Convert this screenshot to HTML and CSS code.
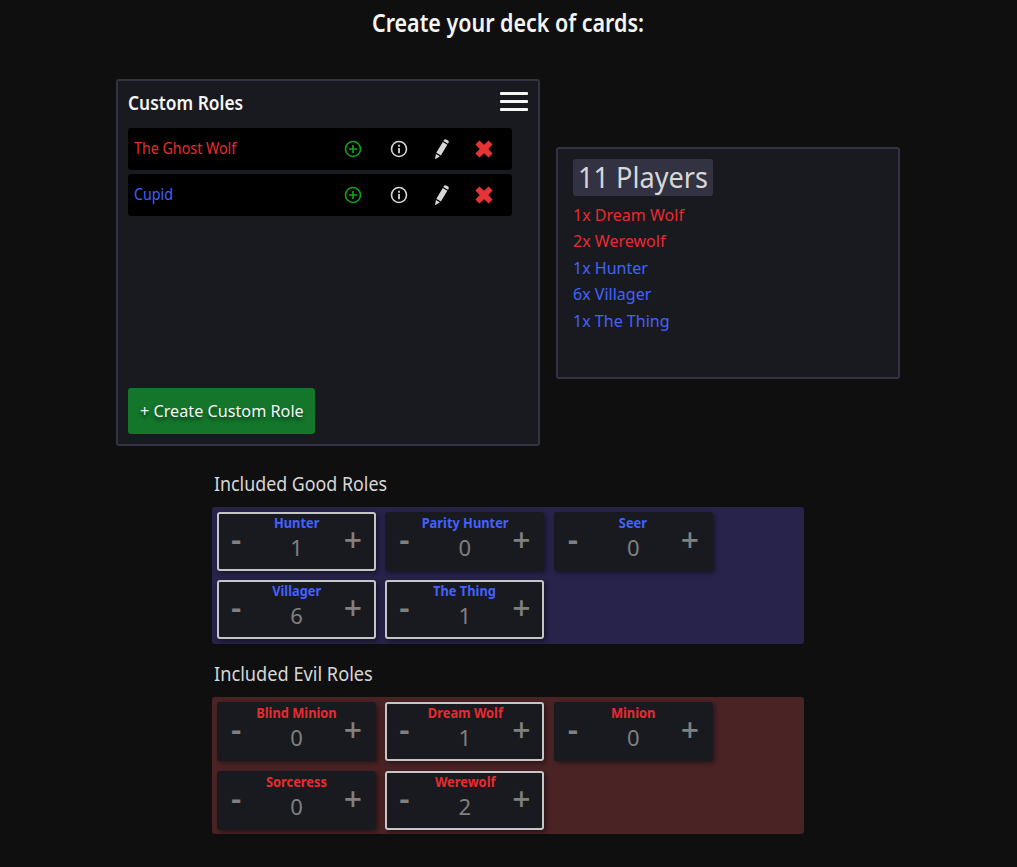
FILE: index.html
```html
<!DOCTYPE html>
<html lang="en">
<head>
<meta charset="utf-8">
<title>Create a game</title>
<link rel="stylesheet" href="styles.css">
</head>
<body>
<svg class="sprite" aria-hidden="true">
  <symbol id="add" viewBox="0 0 18 18"><circle cx="9" cy="9" r="7.5" fill="none" stroke="#0fa31d" stroke-width="1.6"/><path d="M9 5v8M5 9h8" stroke="#0fa31d" stroke-width="1.7"/></symbol>
  <symbol id="info" viewBox="0 0 18 18"><circle cx="9" cy="9" r="7.5" fill="none" stroke="#d7d7d7" stroke-width="1.6"/><path d="M9 4.8v1.9M9 8v5.2" stroke="#d7d7d7" stroke-width="1.8"/></symbol>
  <symbol id="pencil" viewBox="0 0 16 20"><path d="M10.1.7Q11 0 12.2.5l1.9 1.1q1 .7.6 1.8l-.8 1.4L9.3 2.1zM8.8 3l4.5 2.7-6.4 10.8-4.6-2.7zM1.9 14.9l4 2.3-4.3 2.9-.5-.3z" fill="#d7d7d7"/></symbol>
  <symbol id="remove" viewBox="0 0 18 18"><path d="M4.4.4 9 4.7 13.6.4 17.6 4.4 13.3 9l4.3 4.6-4 4L9 13.3l-4.6 4.3-4-4L4.7 9 .4 4.4z" fill="#e73333"/></symbol>
</svg>
<main>
  <h1><span>Create your deck of cards:</span></h1>
  <div class="top">
    <section class="custom">
      <header><h2><span>Custom Roles</span></h2><div class="menu"><i></i><i></i><i></i></div></header>
      <div class="role evil"><div class="name"><span>The Ghost Wolf</span></div><svg class="add"><use href="#add"/></svg><svg class="info"><use href="#info"/></svg><svg class="pencil"><use href="#pencil"/></svg><svg class="remove"><use href="#remove"/></svg></div>
      <div class="role good"><div class="name"><span>Cupid</span></div><svg class="add"><use href="#add"/></svg><svg class="info"><use href="#info"/></svg><svg class="pencil"><use href="#pencil"/></svg><svg class="remove"><use href="#remove"/></svg></div>
      <button><span>+ Create Custom Role</span></button>
    </section>
    <section class="players">
      <div class="count"><span>11 Players</span></div>
      <ul>
        <li class="evil"><span>1x Dream Wolf</span></li>
        <li class="evil"><span>2x Werewolf</span></li>
        <li class="good"><span>1x Hunter</span></li>
        <li class="good"><span>6x Villager</span></li>
        <li class="good"><span>1x The Thing</span></li>
      </ul>
    </section>
  </div>
  <h3><span>Included Good Roles</span></h3>
  <div class="deck deck-good good">
    <div class="card on"><b>-</b><div><h4>Hunter</h4><p>1</p></div><em>+</em></div>
    <div class="card"><b>-</b><div><h4>Parity Hunter</h4><p>0</p></div><em>+</em></div>
    <div class="card"><b>-</b><div><h4>Seer</h4><p>0</p></div><em>+</em></div>
    <div class="card on"><b>-</b><div><h4>Villager</h4><p>6</p></div><em>+</em></div>
    <div class="card on"><b>-</b><div><h4>The Thing</h4><p>1</p></div><em>+</em></div>
  </div>
  <h3><span>Included Evil Roles</span></h3>
  <div class="deck deck-evil evil">
    <div class="card"><b>-</b><div><h4>Blind Minion</h4><p>0</p></div><em>+</em></div>
    <div class="card on"><b>-</b><div><h4>Dream Wolf</h4><p>1</p></div><em>+</em></div>
    <div class="card"><b>-</b><div><h4>Minion</h4><p>0</p></div><em>+</em></div>
    <div class="card"><b>-</b><div><h4>Sorceress</h4><p>0</p></div><em>+</em></div>
    <div class="card on"><b>-</b><div><h4>Werewolf</h4><p>2</p></div><em>+</em></div>
  </div>
</main>
</body>
</html>
```
FILE: styles.css
```css
* { box-sizing: border-box; }
html, body { margin: 0; height: 867px; overflow: hidden; }
body { background: #0f0f10; color: #d7d7d7; font-family: "Noto Sans", sans-serif; font-stretch: semi-condensed; }
h1, h2, h3, h4, p, ul { margin: 0; padding: 0; list-style: none; white-space: nowrap; }
.sprite { display: none; }
span { display: inline-block; transform-origin: 0 50%; }
.good { color: #4361ff; }
.evil { color: #e72b2f; }
h1 { height: 46px; line-height: 45px; text-align: center; font-size: 25px; font-weight: 600; color: #f5f5f5; }
h1 span { transform-origin: 50% 50%; transform: translateX(-.5px) scaleX(.858); }
.top { display: flex; align-items: center; gap: 16px; margin: 33px 0 0 116px; }
.custom { width: 424px; height: 367px; padding: 0 10px 10px; border: 2px solid #333243; border-radius: 3px; background: #191a1f; display: flex; flex-direction: column; }
.custom header { display: flex; justify-content: space-between; height: 47px; }
h2 { font-size: 19.5px; line-height: 44px; font-weight: 600; color: #f5f5f5; }
h2 span { transform: scaleX(.89); }
.menu { display: flex; flex-direction: column; gap: 5px; padding-top: 11px; }
.menu i { width: 28px; height: 3px; border-radius: 1px; background: #f7f7f4; }
.role { display: flex; align-items: center; width: 384px; height: 42px; margin-bottom: 4px; padding-left: 6px; border-radius: 3px; background: #000; }
.role .name { width: 210px; height: 42px; font-size: 15.5px; line-height: 41px; }
.name span { transform: scaleX(.92); }
.role svg { flex: none; }
.role .add, .role .info { width: 18px; height: 18px; }
.role .info { margin-left: 28px; }
.role .pencil { width: 16px; height: 20px; margin-left: 26px; }
.role .remove { width: 18px; height: 18px; margin-left: 25px; }
button { width: 187px; height: 46px; margin-top: auto; padding: 0 0 0 12px; border: 0; border-radius: 3px; background: #13762b; color: #f5f5f5; font: inherit; font-size: 17px; line-height: 46px; text-align: left; text-shadow: 0 3px 4px rgba(0,0,0,.55); white-space: nowrap; }
button span { transform: scaleX(.953); }
.players { width: 344px; height: 232px; padding: 10px 15px; border: 2px solid #333243; border-radius: 3px; background: #191a1f; }
.count { width: 140px; height: 37px; padding-left: 5px; border-radius: 3px; background: #333243; font-size: 29px; line-height: 36px; white-space: nowrap; }
.count span { transform: scaleX(.935); }
ul { padding-top: 5px; }
li { height: 26.5px; font-size: 17px; line-height: 27px; }
li span { transform: scaleX(.943); }
h3 { height: 61px; padding: 22px 0 0 214px; font-size: 19px; line-height: 32px; font-weight: 400; }
h3 span { transform: scaleX(.938); }
.deck { display: grid; grid-template-columns: repeat(3, 159px); grid-auto-rows: 59px; gap: 9px 9.4px; width: 592px; height: 137px; margin-left: 212px; padding: 5px; border-radius: 3px; }
.deck-good { background: #27234a; }
.deck-evil { row-gap: 10px; background: #4a2325; }
.deck + h3 { height: 53px; padding-top: 14px; }
.deck + h3 span { transform: scaleX(.957); }
.card { display: grid; grid-template-columns: 34px minmax(0, 1fr) 42px; border: 2px solid transparent; border-radius: 3px; background: #191a1f; background-clip: border-box; box-shadow: 2px 2px 5px rgba(0,0,0,.45); }
.card.on { border-color: #c5c5c5; }
.card > div { text-align: center; display: flex; flex-direction: column; align-items: center; min-width: 0; margin: 0 -10px 0 -2px; }
h4 { font-size: 14.5px; line-height: 17px; height: 18px; font-weight: 700; transform: scaleX(.885); }
.card p { font-size: 22px; line-height: 30px; color: #808080; font-weight: 400; }
.card b, .card em { font-style: normal; font-weight: 500; font-size: 32px; line-height: 52px; color: #808080; text-align: center; z-index: 1; }
.card b { line-height: 49px; font-weight: 600; }
```
